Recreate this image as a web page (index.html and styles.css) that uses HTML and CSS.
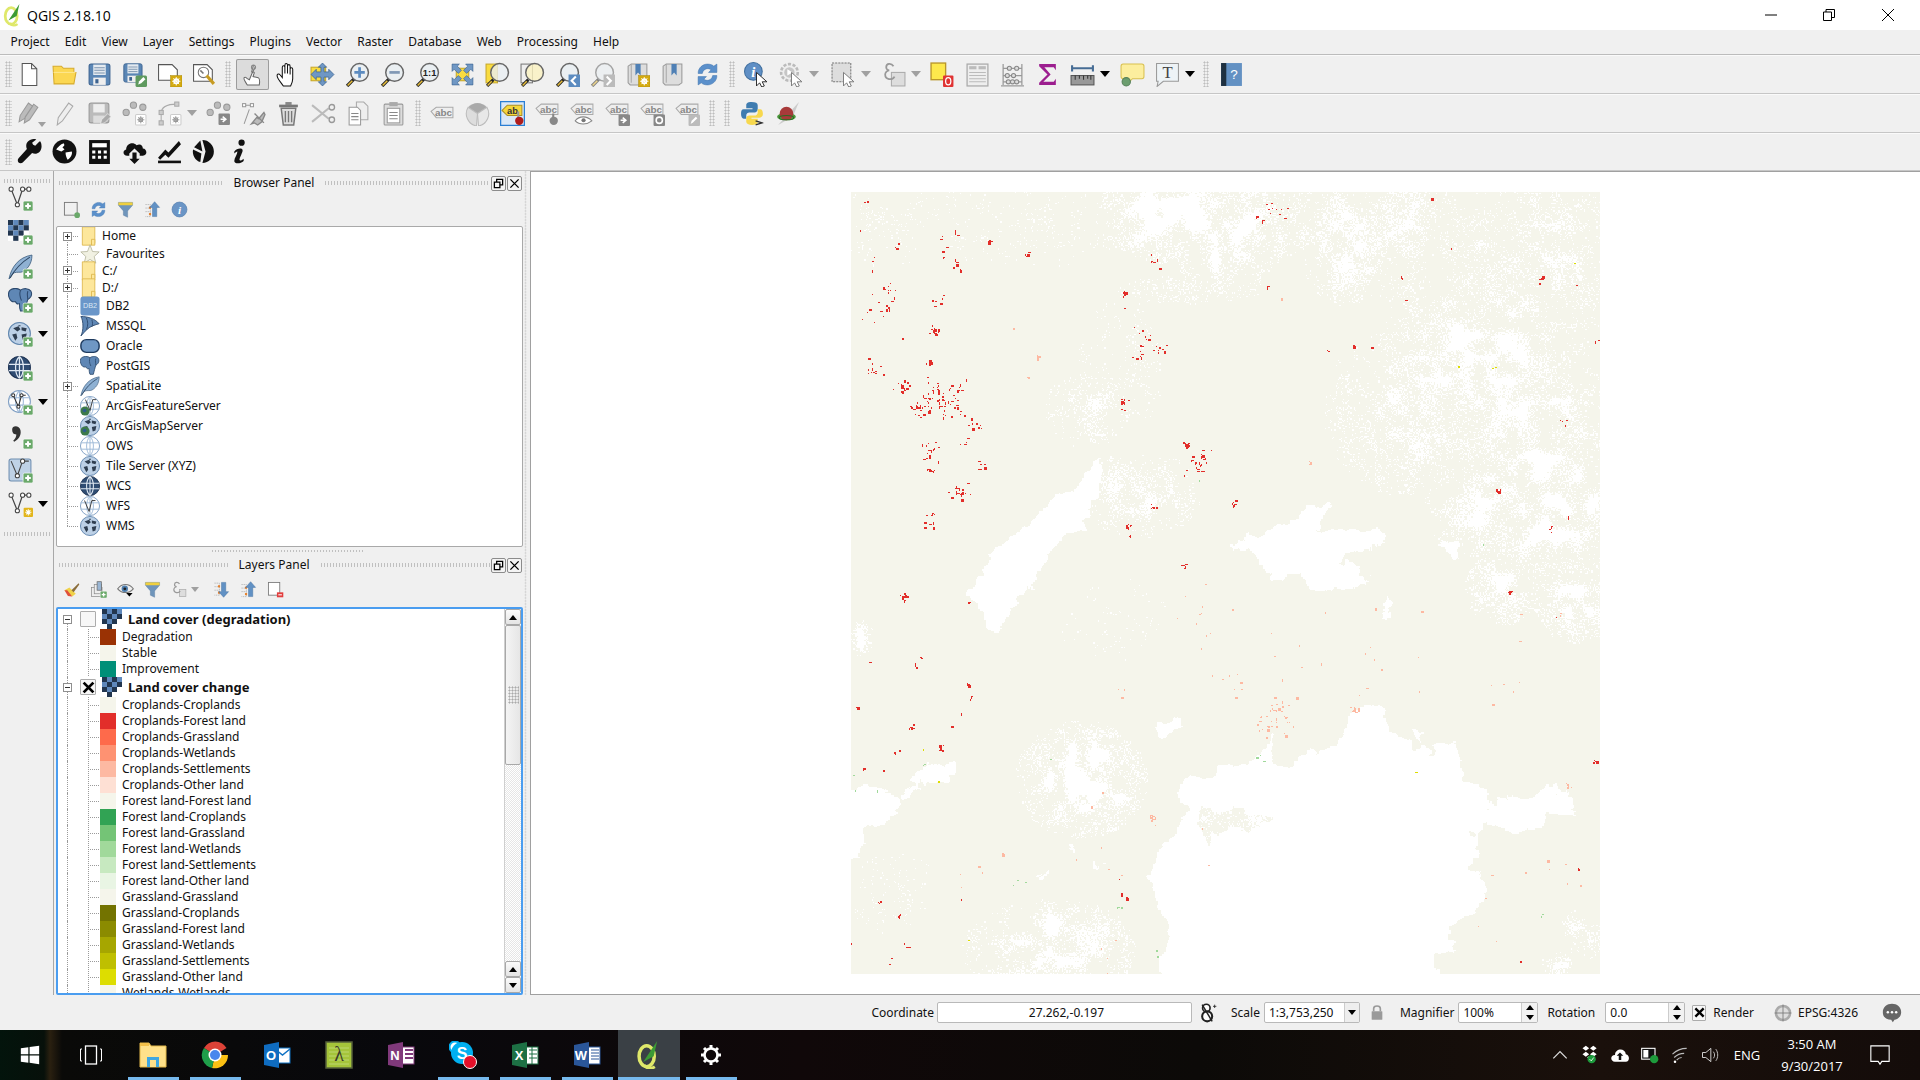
FILE: index.html
```html
<!DOCTYPE html>
<html lang="en">
<head>
<meta charset="utf-8">
<title>QGIS 2.18.10</title>
<link rel="stylesheet" href="styles.css">
</head>
<body>
<svg class="defs" width="0" height="0" aria-hidden="true">
<defs>
<g id="bplus"><rect x="14.5" y="14.5" width="9.5" height="9.5" rx="1.5" fill="#6aa96a" stroke="#fff" stroke-width=".6"/><path d="M19.2 16.5v5.4M16.5 19.2h5.4" stroke="#fff" stroke-width="2"/></g>
<g id="bgear"><rect x="13" y="13" width="11" height="11" fill="#d4aa10" stroke="#a98a10" stroke-width=".5"/><circle cx="18.5" cy="18.5" r="2.2" fill="none" stroke="#fff" stroke-width="1.4"/><path d="M18.5 14.5v8M14.5 18.5h8M15.7 15.7l5.6 5.6M21.3 15.7l-5.6 5.6" stroke="#fff" stroke-width=".9"/></g>
<g id="bgeargrey"><rect x="13" y="13" width="10" height="10" rx="1" fill="#fff" stroke="#ccc"/><circle cx="18" cy="18" r="1.8" fill="none" stroke="#999" stroke-width="1.2"/><path d="M18 14.5v7M14.5 18h7M15.5 15.5l5 5M20.5 15.5l-5 5" stroke="#999" stroke-width=".8"/></g>
<symbol id="new" viewBox="0 0 24 24"><path d="M5 1.500h9l5 5v16H5z" fill="#fff" stroke="#555"/><path d="M14 1.500v5h5" fill="none" stroke="#555"/></symbol>
<symbol id="open" viewBox="0 0 24 24"><path d="M1 4h8l2 2h10v4h2l-2 11H2z" fill="#fbd752" stroke="#d6ab2d"/><path d="M1.500 10h21" stroke="#fde78f"/></symbol>
<symbol id="save" viewBox="0 0 24 24"><rect x="2" y="2" width="20" height="20" rx="2" fill="#5a86b5" stroke="#3d6390"/><rect x="6" y="2.500" width="12" height="10" fill="#e4eaf0"/><path d="M7 5.500h10M7 8h10M7 10.500h10" stroke="#7b94ae"/><rect x="6" y="15" width="12" height="7" fill="#eee"/><rect x="8" y="16.500" width="3" height="4" fill="#3d6390"/></symbol>
<symbol id="saveas" viewBox="0 0 24 24"><use href="#save" width="21" height="21"/><rect x="13" y="13" width="11" height="11" rx="1.500" fill="#5f9a5f"/><path d="M15.500 21.500l1-3 4-4 2 2-4 4z" fill="#fff"/></symbol>
<symbol id="compnew" viewBox="0 0 24 24"><path d="M1.500 2.500h13l5 5v10H1.500z" fill="#fff" stroke="#555"/><use href="#bgear"/></symbol>
<symbol id="compmgr" viewBox="0 0 24 24"><path d="M1.500 2.500h13l5 5v11H1.500z" fill="#fff" stroke="#555"/><circle cx="11" cy="10" r="5" fill="#fff" stroke="#777"/><path d="M14 13l7 8" stroke="#c79b22" stroke-width="3"/><path d="M8 8l3 3" stroke="#777" stroke-width="1.500"/></symbol>
<symbol id="touch" viewBox="0 0 24 24"><path d="M11 10l2-7M15 4l-3 6" stroke="#777" fill="none"/><circle cx="13" cy="5" r="2" fill="none" stroke="#888"/><path d="M7 22c-2-3-4-6-3-7s2 0 3 1l2 1 3-7c1-1 2 0 1.500 1l-1 3 5 1c2 1 1.500 4 1 7z" fill="#fff" stroke="#666"/></symbol>
<symbol id="hand" viewBox="0 0 24 24"><path d="M8 23c-2-3-6-7-6-10 0-2 2-2 3-.5l2 2.500V5c0-2 2.500-2 2.500 0v6V3c0-2 2.500-2 2.500 0v8V4c0-2 2.500-2 2.500 0v8V7c0-2 2.500-2 2.500 0v9c0 3-1 5-2 7z" fill="#fff" stroke="#111"/></symbol>
<symbol id="pan" viewBox="0 0 24 24"><rect x="1" y="5" width="14" height="13" fill="#f9dc40" stroke="#c7a72a"/><path d="M12 1l4 4h-2.500v4.500H18V7l5 5-5 5v-2.500h-4.500V19H16l-4 4-4-4h2.500v-4.500H6V17l-5-5 5-5v2.500h4.500V5H8z" fill="#6f97c4" stroke="#36608f" stroke-width=".7"/></symbol>
<g id="mag"><path d="M2 23l7-7" stroke="#222" stroke-width="3.200"/><path d="M2.500 22.500l4.500-4.500" stroke="#e7bd3b" stroke-width="1.500"/><circle cx="14" cy="10" r="8.500" fill="#eaeff2" stroke="#666" stroke-width="1.400"/></g>
<symbol id="zin" viewBox="0 0 24 24"><use href="#mag"/><path d="M14 5v10M9 10h10" stroke="#5b8bc0" stroke-width="2.600"/></symbol>
<symbol id="zout" viewBox="0 0 24 24"><use href="#mag"/><path d="M9 10h10" stroke="#7f98b5" stroke-width="2.600"/></symbol>
<symbol id="z11" viewBox="0 0 24 24"><use href="#mag"/><text x="14" y="13" font-size="9" font-weight="700" text-anchor="middle" fill="#222" font-family="Liberation Sans">1:1</text></symbol>
<symbol id="zfull" viewBox="0 0 24 24"><rect x="6" y="6" width="12" height="12" fill="#f9dc40" stroke="#c7a72a"/><path d="M2 2h7l-2 2 4 4-3 3-4-4-2 2zM22 2v7l-2-2-4 4-3-3 4-4-2-2zM22 22h-7l2-2-4-4 3-3 4 4 2-2zM2 22v-7l2 2 4-4 3 3-4 4 2 2z" fill="#6f97c4" stroke="#36608f" stroke-width=".6"/></symbol>
<symbol id="zlayer" viewBox="0 0 24 24"><rect x="1" y="2" width="11" height="18" fill="#f9dc40" stroke="#c7a72a"/><path d="M2 23l6-6" stroke="#222" stroke-width="3"/><path d="M2.500 22.500l4-4" stroke="#e7bd3b" stroke-width="1.400"/><circle cx="14" cy="10" r="8.500" fill="#eaeff2" fill-opacity=".8" stroke="#666" stroke-width="1.400"/></symbol>
<symbol id="zsel" viewBox="0 0 24 24"><rect x="1" y="2" width="11" height="18" fill="#eee" stroke="#777"/><path d="M2 23l6-6" stroke="#222" stroke-width="3"/><path d="M2.500 22.500l4-4" stroke="#e7bd3b" stroke-width="1.400"/><circle cx="14" cy="10" r="8.500" fill="#fbf3c0" fill-opacity=".8" stroke="#666" stroke-width="1.400"/></symbol>
<symbol id="zlast" viewBox="0 0 24 24"><use href="#mag"/><rect x="13" y="12" width="11" height="12" fill="#5b8bc0"/><path d="M20 14l-4 4 4 4" fill="none" stroke="#fff" stroke-width="2"/></symbol>
<symbol id="znext" viewBox="0 0 24 24"><g opacity=".55"><use href="#mag"/></g><rect x="13" y="12" width="11" height="12" fill="#bbb"/><path d="M16 14l4 4-4 4" fill="none" stroke="#fff" stroke-width="2"/></symbol>
<symbol id="bookm" viewBox="0 0 24 24"><path d="M3 20V4l3-2h15v18l-3 2H5z" fill="#ddd" stroke="#999"/><path d="M6 2v18" stroke="#aaa"/><path d="M10 2h5v11l-2.500-3L10 13z" fill="#4f80b5"/><use href="#bgear"/></symbol>
<symbol id="bookm2" viewBox="0 0 24 24"><path d="M3 20V4l3-2h15v18l-3 2H5z" fill="#ddd" stroke="#999"/><path d="M6 2v18" stroke="#aaa"/><path d="M11 2h5v11l-2.500-3L11 13z" fill="#4f80b5"/></symbol>
<symbol id="refresh" viewBox="0 0 24 24"><path d="M3 11C3 5 8 2 12 2c3 0 5 1 6 2l3-2v8h-8l2.500-2.500C13 5.500 8 6 7 11zM21 13c0 6-5 9-9 9-3 0-5-1-6-2l-3 2v-8h8l-2.500 2.500C11 18.500 16 18 17 13z" fill="#5b90cb" stroke="#3f73ad" stroke-width=".5"/></symbol>
<g id="cursor"><path d="M12 10l0 13 3-3 2 4 2.500-1-2-4h4.500z" fill="#fff" stroke="#222" stroke-width=".9"/></g>
<symbol id="ident" viewBox="0 0 24 24"><circle cx="9" cy="9" r="8.500" fill="#5f8fc5" stroke="#41709f"/><text x="9" y="14" font-size="14" font-style="italic" font-weight="700" fill="#fff" text-anchor="middle" font-family="Liberation Serif">i</text><use href="#cursor"/></symbol>
<symbol id="action" viewBox="0 0 24 24"><circle cx="10" cy="10" r="8" fill="#eee" stroke="#bbb" stroke-width="2.500" stroke-dasharray="3 1.500"/><circle cx="10" cy="10" r="5" fill="#c6c6c6"/><path d="M8 7l5 3-5 3z" fill="#fff"/><path d="M12 10l0 13 3-3 2 4 2.500-1-2-4h4.500z" fill="#fff" stroke="#777" stroke-width=".9"/></symbol>
<symbol id="select" viewBox="0 0 24 24"><rect x="1" y="1" width="18" height="18" fill="#ddd" stroke="#777" stroke-dasharray="2 1"/><path d="M12 10l0 13 3-3 2 4 2.500-1-2-4h4.500z" fill="#fff" stroke="#777" stroke-width=".9"/></symbol>
<symbol id="expr" viewBox="0 0 24 24"><rect x="10" y="10" width="13" height="13" fill="#ddd" stroke="#aaa"/><path d="M12 4C10 1 5 1 5 5c0 2 2 3 3 3-2 0-4 2-4 4 0 5 7 6 9 2" fill="none" stroke="#999" stroke-width="1.700"/></symbol>
<symbol id="desel" viewBox="0 0 24 24"><rect x="1" y="1" width="14" height="16" fill="#fde84c" stroke="#b9962a" stroke-width="1.300"/><rect x="12.500" y="13" width="10" height="11" rx="1" fill="#e03333"/><ellipse cx="17.500" cy="18.500" rx="2.500" ry="3.500" fill="none" stroke="#fff" stroke-width="1.200"/></symbol>
<symbol id="table" viewBox="0 0 24 24"><rect x="2" y="2" width="20" height="21" fill="#eee" stroke="#aaa" stroke-width="1.200"/><rect x="4" y="4" width="7" height="3" fill="#bbb"/><rect x="13" y="4" width="7" height="3" fill="#bbb"/><path d="M4 10h16M4 13h16M4 16h16M4 19h16" stroke="#bbb"/></symbol>
<symbol id="abacus" viewBox="0 0 24 24"><path d="M3 2v20M21 2v20M1 23h22M3 6h18M3 13h18M3 19h18" stroke="#999" fill="none" stroke-width="1.200"/><circle cx="9" cy="6" r="2" fill="#ddd" stroke="#888"/><circle cx="16" cy="6" r="2" fill="#ddd" stroke="#888"/><circle cx="7" cy="13" r="2" fill="#ddd" stroke="#888"/><circle cx="13" cy="13" r="2" fill="#ddd" stroke="#888"/><circle cx="8" cy="19" r="2" fill="#ddd" stroke="#888"/><circle cx="12" cy="19" r="2" fill="#ddd" stroke="#888"/><circle cx="16" cy="19" r="2" fill="#ddd" stroke="#888"/></symbol>
<symbol id="sigma" viewBox="0 0 24 24"><path d="M4 2h16v6l-2-3H9l6 7-7 7h10l2-3v6H4v-2l8-8-8-8z" fill="#9c1e8f"/></symbol>
<symbol id="measure" viewBox="0 0 24 24"><path d="M2 6h20M2 3v6M22 3v6" stroke="#466c94" stroke-width="2" fill="none"/><rect x="1" y="13" width="22" height="9" fill="#999" stroke="#555"/><path d="M5 13v4M9 13v3M13 13v4M17 13v3M20 13v4" stroke="#333"/></symbol>
<symbol id="tip" viewBox="0 0 24 24"><path d="M3 2h18c1.500 0 2 1 2 2v10c0 1.500-1 2-2 2H12l-4 4-1-4H3c-1.500 0-2-1-2-2V4c0-1 .5-2 2-2z" fill="#fcee9e" stroke="#d8c04f"/><circle cx="6" cy="19" r="4" fill="#6c9e6f" stroke="#56805a"/></symbol>
<symbol id="ttext" viewBox="0 0 24 24"><path d="M1.500 1.500h21v17H8l-6 5 1-5H1.500z" fill="#eef3f6" stroke="#999"/><text x="12" y="15" font-size="16" fill="#444" text-anchor="middle" font-family="Liberation Serif">T</text></symbol>
<symbol id="help" viewBox="0 0 24 24"><rect x="2" y="1" width="20" height="22" fill="#6391c3"/><rect x="2" y="1" width="5" height="22" fill="#1e3040"/><text x="14.500" y="16" font-size="13" fill="#fff" text-anchor="middle" font-family="Liberation Sans">?</text></symbol>
<symbol id="edits" viewBox="0 0 24 24"><path d="M2 20l1-6 8-12 4 3-8 12zM7 21l1-6 8-12 4 3-8 12z" fill="#bbb" stroke="#999"/></symbol>
<symbol id="pencil" viewBox="0 0 24 24"><path d="M5 23l1-7 10-14 4 3-10 14z" fill="#eee" stroke="#aaa"/></symbol>
<symbol id="savelyr" viewBox="0 0 24 24"><rect x="2" y="2" width="19" height="19" rx="2" fill="#bbb" stroke="#999"/><rect x="6" y="3" width="11" height="8" fill="#eee"/><rect x="6" y="14" width="11" height="7" fill="#ddd"/><path d="M13 22l1-4 6-6 3 3-6 6z" fill="#aaa" stroke="#eee" stroke-width=".7"/></symbol>
<symbol id="addfeat" viewBox="0 0 24 24"><circle cx="4" cy="11" r="3" fill="#bbb" stroke="#999"/><circle cx="11" cy="4" r="3" fill="#bbb" stroke="#999"/><circle cx="20" cy="6" r="3" fill="#bbb" stroke="#999"/><use href="#bgeargrey"/></symbol>
<symbol id="addcurve" viewBox="0 0 24 24"><path d="M4 21V12C4 6 10 3 19 3" fill="none" stroke="#aaa"/><rect x="2" y="19" width="4" height="4" fill="#ccc" stroke="#aaa"/><rect x="17" y="1" width="4" height="4" fill="#ccc" stroke="#aaa"/><rect x="2" y="9" width="4" height="4" fill="#ccc" stroke="#aaa"/><use href="#bgeargrey"/></symbol>
<symbol id="movefeat" viewBox="0 0 24 24"><circle cx="4" cy="11" r="3" fill="#bbb" stroke="#999"/><circle cx="11" cy="4" r="3" fill="#bbb" stroke="#999"/><circle cx="20" cy="6" r="3" fill="#bbb" stroke="#999"/><rect x="12" y="12" width="11" height="11" rx="1" fill="#888"/><path d="M14 17.500h4M16 15l3 2.500-3 2.500" stroke="#fff" stroke-width="1.500" fill="none"/></symbol>
<symbol id="nodetool" viewBox="0 0 24 24"><path d="M3 22l5-14M3 4h9M12 4v0" stroke="#999" fill="none"/><rect x="1.500" y="2.500" width="3" height="3" fill="#fff" stroke="#999"/><rect x="9" y="2.500" width="3" height="3" fill="#fff" stroke="#999"/><path d="M10 22l5-6 2 1 5-6 1 2-3 7-4 3-3-2zM13 12l9 9" stroke="#888" stroke-width="1.300" fill="#bbb"/></symbol>
<symbol id="trash" viewBox="0 0 24 24"><path d="M5 7h14l-2 16H7z" fill="#ddd" stroke="#777" stroke-width="1.400"/><path d="M9 9.500v11M12 9.500v11M15 9.500v11" stroke="#777" stroke-width="1.300"/><rect x="3" y="3.500" width="18" height="2.500" fill="#777"/><rect x="9" y="1" width="6" height="3" fill="#888"/></symbol>
<symbol id="cut" viewBox="0 0 24 24"><path d="M1 4l16 13M1 20L17 7" stroke="#bbb" stroke-width="2"/><circle cx="20" cy="6" r="2.600" fill="none" stroke="#999" stroke-width="1.300"/><circle cx="20" cy="18" r="2.600" fill="none" stroke="#999" stroke-width="1.300"/></symbol>
<symbol id="copy" viewBox="0 0 24 24"><path d="M10 1h7l4 4v13H10z" fill="#eee" stroke="#aaa"/><path d="M3 6h8l3 3v14H3z" fill="#fff" stroke="#999"/><path d="M5 12h7M5 15h7M5 18h7" stroke="#888"/></symbol>
<symbol id="paste" viewBox="0 0 24 24"><rect x="3" y="3" width="18" height="20" rx="1" fill="#ddd" stroke="#999"/><rect x="6" y="7" width="12" height="14" fill="#fff" stroke="#999"/><rect x="8" y="1" width="8" height="4" fill="#aaa"/><path d="M8 11h8M8 14h8M8 17h8" stroke="#888"/></symbol>
<g id="abc"><path d="M1 7l5-4h16v10H6z" fill="#eee" stroke="#aaa"/><text x="13" y="11.500" font-size="9.500" font-weight="700" fill="#888" text-anchor="middle" font-family="Liberation Sans">abc</text></g>
<symbol id="labela" viewBox="0 0 24 24"><g transform="translate(0 3)"><use href="#abc"/></g></symbol>
<symbol id="labelp" viewBox="0 0 24 24"><path d="M12 12L3 6a12 12 0 0 1 18 0z" fill="#aaa"/><path d="M12 12l9-6a12 12 0 0 1-8 18z" fill="#e8e8e8" stroke="#bbb"/><path d="M12 12L3 6a12 12 0 0 0 8 18z" fill="#ddd" stroke="#bbb"/></symbol>
<symbol id="labely" viewBox="0 0 24 24"><rect x=".6" y=".6" width="22.800" height="22.800" fill="#dbe8f7" stroke="#2b7fd4" stroke-width="1.200"/><path d="M2 9l5-5h14v10H7z" fill="#f5d73c" stroke="#ac9024"/><text x="12" y="12.500" font-size="9" font-weight="700" fill="#333" text-anchor="middle" font-family="Liberation Sans">ab</text><path d="M17.500 10v7" stroke="#999" stroke-width="2"/><circle cx="18.500" cy="19" r="4" fill="#b01c1c"/></symbol>
<symbol id="labelm" viewBox="0 0 24 24"><use href="#abc"/><path d="M17.500 12v5" stroke="#888" stroke-width="2"/><circle cx="18" cy="19" r="4" fill="#888"/></symbol>
<symbol id="labele" viewBox="0 0 24 24"><use href="#abc"/><path d="M5 19c4-5 11-5 16 0-5 4-12 4-16 0z" fill="#fff" stroke="#888"/><circle cx="13" cy="18.500" r="2" fill="#777"/></symbol>
<symbol id="labelv" viewBox="0 0 24 24"><use href="#abc"/><rect x="13" y="13" width="11" height="11" rx="1" fill="#888"/><path d="M15 18.500h4M17 16l3 2.500-3 2.500" stroke="#fff" stroke-width="1.500" fill="none"/></symbol>
<symbol id="labelr" viewBox="0 0 24 24"><use href="#abc"/><rect x="13" y="13" width="11" height="11" rx="1" fill="#888"/><circle cx="18.500" cy="18.500" r="3" fill="none" stroke="#fff" stroke-width="1.500"/></symbol>
<symbol id="labeled" viewBox="0 0 24 24"><use href="#abc"/><rect x="13" y="13" width="11" height="11" rx="1" fill="#bbb"/><path d="M15 22l1-3 4-4 1.500 1.500-4 4z" fill="#fff"/></symbol>
<symbol id="python" viewBox="0 0 24 24"><path d="M11 1c-4 0-5 1.500-5 3v3h6v1H3.500C1.500 8 1 10 1 12.500S2 17 3.500 17H6v-3c0-2 1.500-3 3-3h5c1.500 0 3-1 3-3V4c0-2-2-3-6-3z" fill="#3f7cb0"/><path d="M12 23c4 0 5-1.500 5-3v-3h-6v-1h7.500c1.500 0 3.500-1 3.500-3.500S21 8 19.500 8H17v3c0 2-1.500 3-3 3H9c-1.500 0-3 1-3 3v3c0 2 2 3 6 3z" fill="#f7d84e"/><path d="M15 19l6 2-6 2" fill="none" stroke="#333" stroke-width="1.300"/></symbol>
<symbol id="plugin" viewBox="0 0 24 24"><path d="M3 23L23 1l-6 14z" fill="#ccc"/><ellipse cx="11" cy="15" rx="9" ry="3.500" fill="#4c9a3d"/><circle cx="11" cy="12" r="6.500" fill="#a83a3a"/><ellipse cx="11" cy="16" rx="7" ry="2" fill="none" stroke="#2c6a20"/></symbol>
<symbol id="wrench" viewBox="0 0 24 24"><path d="M21 2l-4 4-2-1-1-2 4-3c-3-1-6 0-8 2s-2 5-1 7L1 18c-1 1-1 3 0 4s3 1 4 0l9-9c2 1 5 1 7-1s3-6 1-10z" fill="#111" transform="translate(.5 .5)"/></symbol>
<symbol id="bglobe" viewBox="0 0 24 24"><circle cx="12" cy="12" r="11.500" fill="#111"/><path d="M4 10c3-4 5-5 7-6 2 2 0 3-1 4l2 2-3 2c-2-1-3-1-5-2zM13 13l6-1c1 3-2 7-4 8-1-2-2-4-2-7z" fill="#fff"/></symbol>
<symbol id="calc" viewBox="0 0 24 24"><path d="M2 1h20v23H2z" fill="#111"/><path d="M5 4h14v4H5z" fill="#fff"/><path d="M5 11h3v3H5zM10.500 11h3v3h-3zM16 11h3v3h-3zM5 16h3v3H5zM10.500 16h3v3h-3zM16 16h3v3h-3z" fill="#fff"/></symbol>
<symbol id="cloud" viewBox="0 0 24 24"><path d="M5 16C1 16 0 11 4 10c0-5 6-8 10-4 4-2 6 1 6 3 4 0 5 7 0 7h-3v-2l-5-5-5 5v2z" fill="#111"/><path d="M10 13h4v6h3l-5 5-5-5h3z" fill="#111"/></symbol>
<symbol id="chart" viewBox="0 0 24 24"><path d="M1 22h22" stroke="#111" stroke-width="2.500"/><path d="M1 18l7-8 3 3 10-11 2 3-12 13-3-3-5 5z" fill="#111"/></symbol>
<symbol id="pie" viewBox="0 0 24 24"><path d="M10 1v0A11 11 0 1 1 10 23L13 12z" fill="#111"/><path d="M8 1.500L2 8 10 12z" fill="#111"/><path d="M1 10l8 4-1 8C3 21 0 15 1 10z" fill="#111"/></symbol>
<symbol id="info" viewBox="0 0 24 24"><circle cx="14" cy="3.500" r="3" fill="#111"/><path d="M7 12c2-3 8-4 8-1 0 2-3 7-3 9 0 1 2 1 4-1v2c-3 3-9 3-9 0 0-3 3-6 3-9-1 0-2 1-3 2z" fill="#111"/></symbol>
<symbol id="vplus" viewBox="0 0 24 24"><path d="M3 3l6 15 5-15h6" fill="none" stroke="#444" stroke-width="1.200"/><circle cx="3" cy="3" r="2" fill="#fff" stroke="#444"/><circle cx="9" cy="18" r="2" fill="#fff" stroke="#444"/><circle cx="14" cy="3" r="2" fill="#fff" stroke="#444"/><circle cx="20" cy="3" r="2" fill="#fff" stroke="#444"/><use href="#bplus"/></symbol>
<g id="checker"><rect width="20" height="20" fill="#fff"/><rect width="5" height="5" fill="#22364f"/><rect x="5" width="5" height="5" fill="#5f88bb"/><rect x="10" width="5" height="5" fill="#22364f"/><rect x="15" width="5" height="5" fill="#5f88bb"/><rect y="5" width="5" height="5" fill="#5f88bb"/><rect x="5" y="5" width="5" height="5" fill="#22364f"/><rect x="10" y="5" width="5" height="5" fill="#5f88bb"/><rect x="15" y="5" width="5" height="5" fill="#22364f"/><rect y="10" width="5" height="5" fill="#22364f"/><rect x="5" y="10" width="5" height="5" fill="#5f88bb"/><rect x="10" y="10" width="5" height="5" fill="#22364f"/><rect x="5" y="15" width="5" height="5" fill="#22364f"/></g>
<symbol id="rasterp" viewBox="0 0 24 24"><use href="#checker"/><use href="#bplus"/></symbol>
<symbol id="checkers" viewBox="0 0 20 20"><use href="#checker"/></symbol>
<g id="feather"><path d="M1 24C3 13 10 3 23 1c0 9-5 14-9 16-2 1-5 0-8 1-2 1-3 3-5 6z" fill="#8fb1d3" stroke="#3f5f80" stroke-width=".8"/><path d="M2 23C7 14 13 8 21 3" stroke="#2d4663" fill="none"/></g>
<symbol id="featherp" viewBox="0 0 24 24"><use href="#feather"/><use href="#bplus"/></symbol>
<symbol id="featheri" viewBox="0 0 24 24"><use href="#feather"/></symbol>
<g id="eleph"><path d="M2 2c3-2 7-2 10 0 3-2 8-2 10 1 2 4-1 7-3 8-1 3-2 7-3 11h-4c-1-2-1-5-1-7-2 1-3 0-4-2-3 1-5-1-6-4-1-3-1-5 1-7z" fill="#5f87b5" stroke="#2d4a6e"/><path d="M12 2c-1 3-1 6 1 10M19 3c-1 3 0 6 0 8" stroke="#2d4a6e" fill="none"/></g>
<symbol id="elephp" viewBox="0 0 24 24"><use href="#eleph"/><use href="#bplus"/></symbol>
<symbol id="elephi" viewBox="0 0 24 24"><use href="#eleph"/></symbol>
<g id="gdots"><circle cx="11" cy="11" r="10.500" fill="#bcd0e6" stroke="#5f85ad"/><path d="M5 6l5-2 2 3-3 2zM13 5l5 1-1 3-4-1zM4 12l4-1 1 4-2 3zM13 12l5-1-1 5-3 1zM10 3l2 0v1h-2z" fill="#2f3e50"/></g>
<symbol id="gdotsp" viewBox="0 0 24 24"><use href="#gdots"/><use href="#bplus"/></symbol>
<symbol id="gdotsi" viewBox="0 0 22 22"><use href="#gdots"/></symbol>
<g id="gdark"><circle cx="11" cy="11" r="10.500" fill="#2f4c72" stroke="#1b3050"/><path d="M1 8h20M1 14h20M11 .5v21M11 .5C6 5 6 17 11 21.500M11 .5c5 4.500 5 16.500 0 21" stroke="#dfe8f2" stroke-width="1.200" fill="none"/></g>
<symbol id="gdarkp" viewBox="0 0 24 24"><use href="#gdark"/><use href="#bplus"/></symbol>
<symbol id="gdarki" viewBox="0 0 22 22"><use href="#gdark"/></symbol>
<g id="ggrid"><circle cx="11" cy="11" r="10.500" fill="#fff" stroke="#7d9dc2"/><path d="M1 7.500h20M1 14.500h20M11 .5v21M11 .5C6 5 6 17 11 21.500M11 .5c5 4.500 5 16.500 0 21" stroke="#9bb7d6" fill="none"/></g>
<symbol id="ggridi" viewBox="0 0 22 22"><use href="#ggrid"/></symbol>
<symbol id="gvp" viewBox="0 0 24 24"><use href="#ggrid"/><path d="M5 5l5 11 3-11h4" fill="none" stroke="#333" stroke-width="1"/><circle cx="5" cy="5" r="1.500" fill="#fff" stroke="#333"/><circle cx="10" cy="16" r="1.500" fill="#fff" stroke="#333"/><circle cx="13" cy="5" r="1.500" fill="#fff" stroke="#333"/><use href="#bplus"/></symbol>
<symbol id="gvi" viewBox="0 0 22 22"><use href="#ggrid"/><path d="M5 5l5 12 3-12h4" fill="none" stroke="#333"/></symbol>
<symbol id="agsf" viewBox="0 0 22 22"><use href="#ggrid"/><path d="M6 4l5 12 3-12h4" fill="none" stroke="#333"/><circle cx="5.500" cy="16.500" r="5" fill="#3d7a4a"/><circle cx="5" cy="16" r="2" fill="#2d5b8c"/></symbol>
<symbol id="agsm" viewBox="0 0 22 22"><use href="#gdots"/><circle cx="5.500" cy="16.500" r="5" fill="#3d7a4a"/><circle cx="5" cy="16" r="2" fill="#2d5b8c"/></symbol>
<symbol id="comma" viewBox="0 0 24 24"><path d="M4 5c0-4 7-4 8 1 1 5-2 9-6 11l-1-1c2-2 3-4 3-6-3 0-4-2-4-5z" fill="#333"/><use href="#bplus"/></symbol>
<symbol id="vbox" viewBox="0 0 24 24"><rect x="1" y="1" width="21" height="21" rx="2" fill="#bfd2e6" stroke="#6f8eb0"/><path d="M3 3l6 14 5-14h6" fill="none" stroke="#444"/><circle cx="9" cy="17" r="2" fill="#fff" stroke="#444"/><circle cx="14" cy="3" r="2" fill="#fff" stroke="#444"/><use href="#bplus"/></symbol>
<symbol id="vgear" viewBox="0 0 24 24"><path d="M3 3l6 15 5-15h6" fill="none" stroke="#444" stroke-width="1.200"/><circle cx="3" cy="3" r="2" fill="#fff" stroke="#444"/><circle cx="9" cy="18" r="2" fill="#fff" stroke="#444"/><circle cx="14" cy="3" r="2" fill="#fff" stroke="#444"/><circle cx="20" cy="3" r="2" fill="#fff" stroke="#444"/><rect x="15" y="15" width="9" height="9" rx="1" fill="#e2b51b"/><path d="M19.500 16.500v6M16.500 19.500h6M17.500 17.500l4 4M21.500 17.500l-4 4" stroke="#fff"/></symbol>
<symbol id="newgpkg" viewBox="0 0 24 24"><rect x="2" y="2" width="18" height="18" fill="none" stroke="#777" stroke-width="1.300"/><circle cx="20" cy="20" r="4" fill="#6aa96a"/></symbol>
<symbol id="filter" viewBox="0 0 24 24"><path d="M2 2h20v4l-7 8v9l-6-3v-6L2 6z" fill="#6f95bb" stroke="#557aa0" stroke-width=".6"/><rect x="2" y="2" width="20" height="4" fill="#f0d03e"/></symbol>
<symbol id="collapse" viewBox="0 0 24 24"><path d="M2 5h7v17H2M2 10h7M2 15h7" fill="none" stroke="#aaa" stroke-dasharray="2 1"/><rect x="7" y="8" width="3" height="3" fill="#e6822e"/><rect x="7" y="17" width="3" height="3" fill="#e6822e"/><path d="M15 1l7 8h-4v13h-6V9H8z" fill="#6191c4" stroke="#3b6a9c" stroke-width=".6"/></symbol>
<symbol id="expand" viewBox="0 0 24 24"><path d="M2 3h7v17H2M2 8h7M2 13h7" fill="none" stroke="#aaa" stroke-dasharray="2 1"/><rect x="7" y="6" width="3" height="3" fill="#e6822e"/><rect x="7" y="15" width="3" height="3" fill="#e6822e"/><path d="M15 23l7-8h-4V2h-6v13H8z" fill="#6191c4" stroke="#3b6a9c" stroke-width=".6"/></symbol>
<symbol id="infob" viewBox="0 0 24 24"><circle cx="12" cy="12" r="10.500" fill="#6a95c6" stroke="#5680ae"/><text x="12" y="18" font-size="16" font-weight="700" font-style="italic" fill="#fff" text-anchor="middle" font-family="Liberation Serif">i</text></symbol>
<symbol id="style" viewBox="0 0 24 24"><path d="M2 13l7-4 9 9-5 4z" fill="#f0d24a"/><path d="M2 13l5 8 6 1-7-9z" fill="#e0503a"/><path d="M12 13L22 3l1 2-8 11z" fill="#8a6d3b"/></symbol>
<symbol id="addgroup" viewBox="0 0 24 24"><rect x="2" y="9" width="15" height="13" fill="#eee" stroke="#888"/><rect x="6" y="5" width="10" height="13" fill="#eee" stroke="#888"/><rect x="10" y="1" width="6" height="12" fill="#9ab6d4" stroke="#666"/><use href="#bplus"/></symbol>
<symbol id="eye" viewBox="0 0 24 24"><path d="M1 11c6-8 16-8 22 0-6 7-16 7-22 0z" fill="#eee" stroke="#777" stroke-width="1.500"/><circle cx="11" cy="11" r="4.500" fill="#4d7eaf"/><circle cx="11" cy="11" r="2" fill="#222"/><path d="M13 17h9l-4.500 5z" fill="#000"/></symbol>
<symbol id="exprs" viewBox="0 0 24 24"><rect x="12" y="12" width="9" height="10" fill="#ddd" stroke="#aaa"/><path d="M12 4C10 1 5 1 5 5c0 2 2 3 3 3-2 0-4 2-4 4 0 5 7 6 9 2" fill="none" stroke="#999" stroke-width="1.700"/></symbol>
<symbol id="rmlayer" viewBox="0 0 24 24"><rect x="2" y="2" width="16" height="18" fill="#fff" stroke="#777" stroke-width="1.200"/><rect x="14" y="16" width="9" height="7" fill="#e23e3e"/><path d="M16 19.500h5" stroke="#fff" stroke-width="1.500"/></symbol>
<symbol id="folder" viewBox="0 0 24 24"><path d="M4 1h15v20h-4v2H4z" fill="#fde79c" stroke="#dcb64a"/><path d="M19 16h-4v7h4z" fill="#fde79c" stroke="#dcb64a"/></symbol>
<symbol id="star" viewBox="0 0 24 24"><path d="M12 1l3 8 8 .5-6 5.500 2 8-7-4.500L5 23l2-8-6-5.500L9 9z" fill="#f1f1e2" stroke="#b6b69c"/></symbol>
<symbol id="db2" viewBox="0 0 22 22"><rect x=".5" y=".5" width="21" height="21" rx="3" fill="#6a96c9"/><text x="11" y="13.500" font-size="8" fill="#dbe7f3" text-anchor="middle" font-family="Liberation Sans">DB2</text></symbol>
<symbol id="mssql" viewBox="0 0 22 22"><path d="M1 22C4 16 4 6 1 .5c8 0 16 3 20 8-4 1-10 3-13 6-2 2-5 5-7 7.500z" fill="#5f87b5" stroke="#2d4a6e"/><path d="M7 2c2 4 2 9 0 13M13 4c1 3 1 6 0 8" stroke="#2d4a6e" fill="none"/></symbol>
<symbol id="oracle" viewBox="0 0 22 16"><rect x="1" y="1" width="20" height="14" rx="6" fill="#6f97c4" stroke="#1f3b5f" stroke-width="1.600"/></symbol>
<symbol id="crs" viewBox="0 0 24 24"><circle cx="12" cy="12" r="10" fill="#aaa"/><circle cx="12" cy="12" r="7" fill="#ddd"/><path d="M2 12h20M12 2v20" stroke="#777"/></symbol>
<symbol id="lock" viewBox="0 0 24 24"><rect x="4" y="10" width="16" height="13" rx="1" fill="#9a9a9a"/><path d="M7 10V6c0-5 10-5 10 0v4" fill="none" stroke="#9a9a9a" stroke-width="2.500"/></symbol>
<symbol id="mapt" viewBox="0 0 24 24"><circle cx="10" cy="6" r="4.500" fill="#fff" stroke="#222" stroke-width="2"/><circle cx="11" cy="16" r="6" fill="#fff" stroke="#222" stroke-width="2.500"/><path d="M5 2l12 20" stroke="#222" stroke-width="1.800"/><path d="M20 2v4M18 4h4" stroke="#222"/></symbol>
<symbol id="bubble" viewBox="0 0 24 24"><path d="M12 1c6 0 11 4 11 10s-5 9-8 9l-2 3-2-3C5 20 1 17 1 11S6 1 12 1z" fill="#666"/><circle cx="7" cy="11" r="1.500" fill="#fff"/><circle cx="12" cy="11" r="1.500" fill="#fff"/><circle cx="17" cy="11" r="1.500" fill="#fff"/></symbol>
<symbol id="qgis" viewBox="0 0 24 24"><ellipse cx="10" cy="13" rx="6.500" ry="9" fill="none" stroke="#dfe86a" stroke-width="3"/><path d="M8 21c3 3 6 3 9 1" stroke="#dfe86a" stroke-width="2.500" fill="none"/><path d="M7 18L19 0l-3 13z" fill="#3c9a35"/></symbol>
<symbol id="tv" viewBox="0 0 24 24"><rect x="6.500" y="3" width="11" height="18" fill="none" stroke="#fff" stroke-width="1.300"/><path d="M3 6H1.500v12H3M21 6h1.500v12H21" fill="none" stroke="#fff"/></symbol>
<symbol id="win" viewBox="0 0 24 24"><path d="M1 4l9-1.300V11H1zM11.500 2.500L23 1v10H11.500zM1 12.500h9v8.800L1 20zM11.500 12.500H23V23l-11.500-1.600z" fill="#fff"/></symbol>
<symbol id="explorer" viewBox="0 0 28 28"><path d="M1 2h9l2 3h15v21H1z" fill="#ffe18a" stroke="#e2b84a"/><rect x="1" y="2" width="9" height="3" fill="#f3c04a"/><path d="M8 16h12v10H8z" fill="#3fa7e0"/><path d="M11 19h6v7h-6z" fill="#ffe18a"/></symbol>
<symbol id="chrome" viewBox="0 0 28 28"><path d="M14 14L3 7a13 13 0 0 1 22.500 0z" fill="#dc4237"/><path d="M14 14H27A13 13 0 0 1 11 27z" fill="#fbc013"/><path d="M14 14l-3 13A13 13 0 0 1 3 7z" fill="#1f9e4a"/><circle cx="14" cy="14" r="6.500" fill="#fff"/><circle cx="14" cy="14" r="5" fill="#4a87ed"/></symbol>
<symbol id="outlook" viewBox="0 0 28 28"><rect x="12" y="7" width="15" height="15" fill="#fff" stroke="#0f72c4"/><path d="M12 8l7.500 6L27 8" fill="none" stroke="#0f72c4" stroke-width="1.500"/><path d="M1 4l15-3v26L1 24z" fill="#0f6cc0"/><text x="8" y="19" font-size="13" font-weight="700" fill="#fff" text-anchor="middle" font-family="Liberation Sans">O</text></symbol>
<symbol id="lambda" viewBox="0 0 28 28"><rect x="1" y="1" width="26" height="26" fill="#a5c43a" stroke="#55603a" stroke-width="1.500"/><path d="M4 7h20M4 11h20M4 15h20M4 19h20M4 23h20" stroke="#bcd770" stroke-width="1"/><text x="14" y="20" font-size="20" fill="#3a3a2a" text-anchor="middle" font-family="Liberation Serif">&#955;</text></symbol>
<symbol id="onenote" viewBox="0 0 28 28"><rect x="14" y="6" width="13" height="17" fill="#fff" stroke="#80397b"/><path d="M18 9h8M18 13h8M18 17h8" stroke="#80397b" stroke-width="2"/><path d="M1 4l15-3v26L1 24z" fill="#80397b"/><text x="8" y="19" font-size="13" font-weight="700" fill="#fff" text-anchor="middle" font-family="Liberation Sans">N</text></symbol>
<symbol id="skype" viewBox="0 0 28 28"><circle cx="6" cy="6" r="5.500" fill="#fff" stroke="#00aff0" stroke-width="2"/><circle cx="13" cy="12" r="11" fill="#00aff0"/><circle cx="20" cy="20" r="6" fill="#00aff0"/><text x="13" y="18" font-size="16" font-weight="700" fill="#fff" text-anchor="middle" font-family="Liberation Sans">S</text><circle cx="21" cy="21" r="6.500" fill="#e3102a" stroke="#fff"/></symbol>
<symbol id="excel" viewBox="0 0 28 28"><rect x="14" y="6" width="13" height="17" fill="#fff" stroke="#1d7044"/><path d="M18 9h8M18 13h8M18 17h8M21 6v17" stroke="#1d7044"/><path d="M1 4l15-3v26L1 24z" fill="#1d7044"/><text x="8" y="19" font-size="13" font-weight="700" fill="#fff" text-anchor="middle" font-family="Liberation Sans">X</text></symbol>
<symbol id="word" viewBox="0 0 28 28"><rect x="14" y="6" width="13" height="17" fill="#fff" stroke="#2a5699"/><path d="M18 9h8M18 12h8M18 15h8M18 18h8" stroke="#2a5699"/><path d="M1 4l15-3v26L1 24z" fill="#2a5699"/><text x="8" y="19" font-size="13" font-weight="700" fill="#fff" text-anchor="middle" font-family="Liberation Sans">W</text></symbol>
<symbol id="gear" viewBox="0 0 24 24"><circle cx="12" cy="12" r="6.500" fill="none" stroke="#fff" stroke-width="2.600"/><path d="M12 2v4M12 18v4M2 12h4M18 12h4M5 5l2.800 2.800M16.200 16.200L19 19M19 5l-2.800 2.800M7.800 16.200L5 19" stroke="#fff" stroke-width="3"/></symbol>
<symbol id="dropbox" viewBox="0 0 18 24"><path d="M4 1l4 3-4 3-4-3zM13 1l4 3-4 3-4-3zM4 8l4 3-4 3-4-3zM13 8l4 3-4 3-4-3zM8.500 13l3 2-3 2-3-2z" fill="#fff"/><circle cx="11" cy="17" r="5" fill="#1d9b3c"/><path d="M8.500 17l2 2 3-4" stroke="#fff" fill="none"/></symbol>
<symbol id="tcloud" viewBox="0 0 24 24"><path d="M6 20c-6 0-6-8 0-8 0-8 12-9 13-1 5 1 5 9 0 9z" fill="#fff"/><path d="M12 9l4 4h-2.500v5h-3v-5H8z" fill="#111"/></symbol>
<symbol id="batt" viewBox="0 0 24 24"><rect x="2" y="4" width="16" height="13" fill="#111" stroke="#fff" stroke-width="1.300"/><rect x="4" y="6" width="6" height="9" fill="#fff"/><circle cx="17" cy="17" r="5" fill="#1d9b3c"/></symbol>
<symbol id="wifi" viewBox="0 0 24 24"><path d="M3 11c5-5 12-7 17-7M5 15c3-3 8-5 12-5M8 18c2-2 4-3 6-3" fill="none" stroke="#bbb" stroke-width="1.300"/><circle cx="6" cy="20" r="1.500" fill="#fff"/></symbol>
<symbol id="speaker" viewBox="0 0 24 24"><path d="M3 9h4l6-5v16l-6-5H3z" fill="none" stroke="#ddd" stroke-width="1.100"/><path d="M16 8c2 2 2 6 0 8M19 5c3 4 3 10 0 14" fill="none" stroke="#ddd"/></symbol>
<symbol id="notif" viewBox="0 0 24 24"><path d="M2 2h20v17H14l-2 3-2-3H2z" fill="none" stroke="#fff" stroke-width="1.200"/></symbol>
</defs>
</svg>

<div class="window">
  <header class="titlebar">
    <svg class="title-ico"><use href="#qgis"/></svg>
    <span class="title-text">QGIS 2.18.10</span>
    <div class="winctl">
      <span class="wc"><svg class="wc-i" viewBox="0 0 12 12"><path d="M0 6h12" stroke="#000"/></svg></span>
      <span class="wc"><svg class="wc-i" viewBox="0 0 12 12"><path d="M.5 3h8v8.500H.5zM3 3V.5h8.500v8H9" fill="none" stroke="#000"/></svg></span>
      <span class="wc"><svg class="wc-i" viewBox="0 0 12 12"><path d="M0 0l12 12M12 0L0 12" stroke="#000"/></svg></span>
    </div>
  </header>

  <nav class="menubar"><span>Project</span><span>Edit</span><span>View</span><span>Layer</span><span>Settings</span><span>Plugins</span><span>Vector</span><span>Raster</span><span>Database</span><span>Web</span><span>Processing</span><span>Help</span></nav>

  <div class="toolbar">
    <i class="grip"></i>
    <b class="t"><svg class="ico"><use href="#new"/></svg></b>
    <b class="t"><svg class="ico"><use href="#open"/></svg></b>
    <b class="t"><svg class="ico"><use href="#save"/></svg></b>
    <b class="t"><svg class="ico"><use href="#saveas"/></svg></b>
    <b class="t"><svg class="ico"><use href="#compnew"/></svg></b>
    <b class="t"><svg class="ico"><use href="#compmgr"/></svg></b>
    <i class="grip g13"></i>
    <b class="t on"><svg class="ico"><use href="#touch"/></svg></b>
    <b class="t"><svg class="ico"><use href="#hand"/></svg></b>
    <b class="t"><svg class="ico"><use href="#pan"/></svg></b>
    <b class="t"><svg class="ico"><use href="#zin"/></svg></b>
    <b class="t"><svg class="ico"><use href="#zout"/></svg></b>
    <b class="t"><svg class="ico"><use href="#z11"/></svg></b>
    <b class="t"><svg class="ico"><use href="#zfull"/></svg></b>
    <b class="t"><svg class="ico"><use href="#zlayer"/></svg></b>
    <b class="t"><svg class="ico"><use href="#zsel"/></svg></b>
    <b class="t"><svg class="ico"><use href="#zlast"/></svg></b>
    <b class="t"><svg class="ico"><use href="#znext"/></svg></b>
    <b class="t"><svg class="ico"><use href="#bookm"/></svg></b>
    <b class="t"><svg class="ico"><use href="#bookm2"/></svg></b>
    <b class="t"><svg class="ico"><use href="#refresh"/></svg></b>
    <i class="grip g14"></i>
    <b class="t"><svg class="ico"><use href="#ident"/></svg></b>
    <b class="t"><svg class="ico"><use href="#action"/></svg></b><u class="arr grey w17"></u>
    <b class="t"><svg class="ico"><use href="#select"/></svg></b><u class="arr grey w15"></u>
    <b class="t"><svg class="ico"><use href="#expr"/></svg></b><u class="arr grey w14"></u>
    <b class="t"><svg class="ico"><use href="#desel"/></svg></b>
    <b class="t"><svg class="ico"><use href="#table"/></svg></b>
    <b class="t"><svg class="ico"><use href="#abacus"/></svg></b>
    <b class="t"><svg class="ico"><use href="#sigma"/></svg></b>
    <b class="t"><svg class="ico"><use href="#measure"/></svg></b><u class="arr w15"></u>
    <b class="t"><svg class="ico"><use href="#tip"/></svg></b>
    <b class="t"><svg class="ico"><use href="#ttext"/></svg></b><u class="arr w13"></u>
    <i class="grip g16"></i>
    <b class="t"><svg class="ico"><use href="#help"/></svg></b>
  </div>

  <div class="toolbar">
    <i class="grip"></i>
    <b class="t"><svg class="ico"><use href="#edits"/></svg><u class="arr grey mini"></u></b>
    <b class="t"><svg class="ico"><use href="#pencil"/></svg></b>
    <b class="t"><svg class="ico"><use href="#savelyr"/></svg></b>
    <b class="t"><svg class="ico"><use href="#addfeat"/></svg></b>
    <b class="t"><svg class="ico"><use href="#addcurve"/></svg></b><u class="arr grey w14"></u>
    <b class="t"><svg class="ico"><use href="#movefeat"/></svg></b>
    <b class="t"><svg class="ico"><use href="#nodetool"/></svg></b>
    <b class="t"><svg class="ico"><use href="#trash"/></svg></b>
    <b class="t"><svg class="ico"><use href="#cut"/></svg></b>
    <b class="t"><svg class="ico"><use href="#copy"/></svg></b>
    <b class="t"><svg class="ico"><use href="#paste"/></svg></b>
    <i class="grip g14"></i>
    <b class="t"><svg class="ico"><use href="#labela"/></svg></b>
    <b class="t"><svg class="ico"><use href="#labelp"/></svg></b>
    <b class="t"><svg class="ico"><use href="#labely"/></svg></b>
    <b class="t"><svg class="ico"><use href="#labelm"/></svg></b>
    <b class="t"><svg class="ico"><use href="#labele"/></svg></b>
    <b class="t"><svg class="ico"><use href="#labelv"/></svg></b>
    <b class="t"><svg class="ico"><use href="#labelr"/></svg></b>
    <b class="t"><svg class="ico"><use href="#labeled"/></svg></b>
    <i class="grip g14"></i>
    <i class="grip g16"></i>
    <b class="t"><svg class="ico"><use href="#python"/></svg></b>
    <b class="t"><svg class="ico"><use href="#plugin"/></svg></b>
  </div>

  <div class="toolbar tb3">
    <i class="grip"></i>
    <b class="t"><svg class="ico"><use href="#wrench"/></svg></b>
    <b class="t"><svg class="ico"><use href="#bglobe"/></svg></b>
    <b class="t"><svg class="ico"><use href="#calc"/></svg></b>
    <b class="t"><svg class="ico"><use href="#cloud"/></svg></b>
    <b class="t"><svg class="ico"><use href="#chart"/></svg></b>
    <b class="t"><svg class="ico"><use href="#pie"/></svg></b>
    <b class="t"><svg class="ico"><use href="#info"/></svg></b>
  </div>

  <div class="main">
    <aside class="lefttb">
      <i class="hgrip top"></i>
      <b class="lt"><svg class="ico"><use href="#vplus"/></svg></b>
      <b class="lt"><svg class="ico"><use href="#rasterp"/></svg></b>
      <b class="lt"><svg class="ico"><use href="#featherp"/></svg></b>
      <b class="lt"><svg class="ico"><use href="#elephp"/></svg><u class="arr"></u></b>
      <b class="lt"><svg class="ico"><use href="#gdotsp"/></svg><u class="arr"></u></b>
      <b class="lt"><svg class="ico"><use href="#gdarkp"/></svg></b>
      <b class="lt"><svg class="ico"><use href="#gvp"/></svg><u class="arr"></u></b>
      <b class="lt"><svg class="ico"><use href="#comma"/></svg></b>
      <b class="lt"><svg class="ico"><use href="#vbox"/></svg></b>
      <b class="lt"><svg class="ico"><use href="#vgear"/></svg><u class="arr"></u></b>
      <i class="hgrip bottom"></i>
    </aside>

    <section class="docks">
      <div class="dockhead">
        <i class="hgrip"></i><span class="docktitle">Browser Panel</span><i class="hgrip"></i>
        <span class="dbtn"><svg viewBox="0 0 12 12"><path d="M1.500 4.500h6v6h-6zM4 4.500v-3h6.500v6h-3" fill="none" stroke="#000" stroke-width="1.400"/></svg></span>
        <span class="dbtn"><svg viewBox="0 0 12 12"><path d="M1.500 1.500l9 9M10.500 1.500l-9 9" stroke="#000" stroke-width="1.500"/></svg></span>
      </div>
      <div class="docktools dt-browser">
        <b class="d"><svg class="ics"><use href="#newgpkg"/></svg></b>
        <b class="d"><svg class="ics"><use href="#refresh"/></svg></b>
        <b class="d"><svg class="ics"><use href="#filter"/></svg></b>
        <b class="d"><svg class="ics"><use href="#collapse"/></svg></b>
        <b class="d"><svg class="ics"><use href="#infob"/></svg></b>
      </div>
      <div class="tree browser">
        <div class="row h18 first"><s class="exp plus"></s><svg class="fi"><use href="#folder"/></svg><span class="lab tight">Home</span></div>
        <div class="row h17"><svg class="ri"><use href="#star"/></svg><span class="lab">Favourites</span></div>
        <div class="row h17"><s class="exp plus"></s><svg class="fi"><use href="#folder"/></svg><span class="lab tight">C:/</span></div>
        <div class="row h17"><s class="exp plus"></s><svg class="fi"><use href="#folder"/></svg><span class="lab tight">D:/</span></div>
        <div class="row h20"><svg class="ri"><use href="#db2"/></svg><span class="lab">DB2</span></div>
        <div class="row h20"><svg class="ri"><use href="#mssql"/></svg><span class="lab">MSSQL</span></div>
        <div class="row h20"><svg class="ri"><use href="#oracle"/></svg><span class="lab">Oracle</span></div>
        <div class="row h20"><svg class="ri"><use href="#elephi"/></svg><span class="lab">PostGIS</span></div>
        <div class="row h20"><s class="exp plus"></s><svg class="ri"><use href="#featheri"/></svg><span class="lab">SpatiaLite</span></div>
        <div class="row h20"><svg class="ri"><use href="#agsf"/></svg><span class="lab">ArcGisFeatureServer</span></div>
        <div class="row h20"><svg class="ri"><use href="#agsm"/></svg><span class="lab">ArcGisMapServer</span></div>
        <div class="row h20"><svg class="ri"><use href="#ggridi"/></svg><span class="lab">OWS</span></div>
        <div class="row h20"><svg class="ri"><use href="#gdotsi"/></svg><span class="lab">Tile Server (XYZ)</span></div>
        <div class="row h20"><svg class="ri"><use href="#gdarki"/></svg><span class="lab">WCS</span></div>
        <div class="row h20"><svg class="ri"><use href="#gvi"/></svg><span class="lab">WFS</span></div>
        <div class="row h20 last"><svg class="ri"><use href="#gdotsi"/></svg><span class="lab">WMS</span></div>
      </div>
      <div class="splitter"><i class="hgrip"></i></div>
      <div class="dockhead">
        <i class="hgrip"></i><span class="docktitle">Layers Panel</span><i class="hgrip"></i>
        <span class="dbtn"><svg viewBox="0 0 12 12"><path d="M1.500 4.500h6v6h-6zM4 4.500v-3h6.500v6h-3" fill="none" stroke="#000" stroke-width="1.400"/></svg></span>
        <span class="dbtn"><svg viewBox="0 0 12 12"><path d="M1.500 1.500l9 9M10.500 1.500l-9 9" stroke="#000" stroke-width="1.500"/></svg></span>
      </div>
      <div class="docktools dt-layers">
        <b class="d"><svg class="ics"><use href="#style"/></svg></b>
        <b class="d"><svg class="ics"><use href="#addgroup"/></svg></b>
        <b class="d"><svg class="ics"><use href="#eye"/></svg></b>
        <b class="d"><svg class="ics"><use href="#filter"/></svg></b>
        <b class="d"><svg class="ics"><use href="#exprs"/></svg></b><u class="arr grey d-arr"></u>
        <b class="d"><svg class="ics"><use href="#expand"/></svg></b>
        <b class="d"><svg class="ics"><use href="#collapse"/></svg></b>
        <b class="d"><svg class="ics"><use href="#rmlayer"/></svg></b>
      </div>
      <div class="tree layers">
        <div class="layer-rows">
          <div class="lrow head first"><s class="exp minus"></s><span class="chk"></span><svg class="lico"><use href="#checkers"/></svg><strong>Land cover (degradation)</strong></div>
          <div class="lrow sub"><em class="sw c-deg"></em>Degradation</div>
          <div class="lrow sub"><em class="sw c-nil"></em>Stable</div>
          <div class="lrow sub lastsub"><em class="sw c-imp"></em>Improvement</div>
          <div class="lrow head"><s class="exp minus"></s><span class="chk"><svg viewBox="0 0 12 12"><path d="M1.500 1.500l9 9M10.500 1.500l-9 9" stroke="#000" stroke-width="2.600"/></svg></span><svg class="lico"><use href="#checkers"/></svg><strong>Land cover change</strong></div>
          <div class="lrow sub"><em class="sw c-nil"></em>Croplands-Croplands</div>
          <div class="lrow sub"><em class="sw c-r1"></em>Croplands-Forest land</div>
          <div class="lrow sub"><em class="sw c-r2"></em>Croplands-Grassland</div>
          <div class="lrow sub"><em class="sw c-r3"></em>Croplands-Wetlands</div>
          <div class="lrow sub"><em class="sw c-r4"></em>Croplands-Settlements</div>
          <div class="lrow sub"><em class="sw c-r5"></em>Croplands-Other land</div>
          <div class="lrow sub"><em class="sw c-nil"></em>Forest land-Forest land</div>
          <div class="lrow sub"><em class="sw c-g1"></em>Forest land-Croplands</div>
          <div class="lrow sub"><em class="sw c-g2"></em>Forest land-Grassland</div>
          <div class="lrow sub"><em class="sw c-g3"></em>Forest land-Wetlands</div>
          <div class="lrow sub"><em class="sw c-g4"></em>Forest land-Settlements</div>
          <div class="lrow sub"><em class="sw c-g5"></em>Forest land-Other land</div>
          <div class="lrow sub"><em class="sw c-nil"></em>Grassland-Grassland</div>
          <div class="lrow sub"><em class="sw c-o1"></em>Grassland-Croplands</div>
          <div class="lrow sub"><em class="sw c-o2"></em>Grassland-Forest land</div>
          <div class="lrow sub"><em class="sw c-o3"></em>Grassland-Wetlands</div>
          <div class="lrow sub"><em class="sw c-o4"></em>Grassland-Settlements</div>
          <div class="lrow sub"><em class="sw c-o5"></em>Grassland-Other land</div>
          <div class="lrow sub"><em class="sw c-nil"></em>Wetlands-Wetlands</div>
        </div>
        <div class="sbar">
          <span class="sb-btn"><u class="up"></u></span>
          <span class="sb-thumb"><i class="sb-grip"></i></span>
          <span class="sb-track"></span>
          <span class="sb-btn"><u class="up"></u></span>
          <span class="sb-btn"><u class="down"></u></span>
        </div>
      </div>
    </section>

    <div class="gutter"></div>
    <section class="canvas-wrap"><canvas id="map" class="map" width="612" height="639"></canvas></section>
  </div>

  <footer class="status">
    <span class="stl first">Coordinate</span>
    <span class="inp coord">27.262,-0.197</span>
    <svg class="sic m6"><use href="#mapt"/></svg>
    <span class="stl m13">Scale</span>
    <span class="inp combo">1:3,753,250<u class="cmb"><u class="down"></u></u></span>
    <svg class="sic lock"><use href="#lock"/></svg>
    <span class="stl m15">Magnifier</span>
    <span class="inp spin">100%<u class="spn"><u class="up"></u><u class="down"></u></u></span>
    <span class="stl m9">Rotation</span>
    <span class="inp spin m10">0.0<u class="spn"><u class="up"></u><u class="down"></u></u></span>
    <span class="chk small"><svg viewBox="0 0 12 12"><path d="M1.500 1.500l9 9M10.500 1.500l-9 9" stroke="#000" stroke-width="2.600"/></svg></span>
    <span class="stl m7">Render</span>
    <svg class="sic m21"><use href="#crs"/></svg>
    <span class="stl m5">EPSG:4326</span>
    <svg class="sic m23"><use href="#bubble"/></svg>
  </footer>

  <footer class="taskbar">
    <span class="tk first"><svg class="tki sm"><use href="#win"/></svg></span>
    <span class="tk tview"><svg class="tki mid"><use href="#tv"/></svg></span>
    <span class="tk run"><svg class="tki"><use href="#explorer"/></svg></span>
    <span class="tk run"><svg class="tki"><use href="#chrome"/></svg></span>
    <span class="tk"><svg class="tki"><use href="#outlook"/></svg></span>
    <span class="tk"><svg class="tki"><use href="#lambda"/></svg></span>
    <span class="tk"><svg class="tki"><use href="#onenote"/></svg></span>
    <span class="tk run"><svg class="tki"><use href="#skype"/></svg></span>
    <span class="tk run"><svg class="tki"><use href="#excel"/></svg></span>
    <span class="tk run"><svg class="tki"><use href="#word"/></svg></span>
    <span class="tk run active"><svg class="tki"><use href="#qgis"/></svg></span>
    <span class="tk run"><svg class="tki mid"><use href="#gear"/></svg></span>
    <div class="tray">
      <span class="tr"><svg class="tri" viewBox="0 0 24 24"><path d="M4 16l8-8 8 8" fill="none" stroke="#ddd" stroke-width="1.500"/></svg></span>
      <span class="tr"><svg class="tri"><use href="#dropbox"/></svg></span>
      <span class="tr"><svg class="tri"><use href="#tcloud"/></svg></span>
      <span class="tr"><svg class="tri"><use href="#batt"/></svg></span>
      <span class="tr"><svg class="tri"><use href="#wifi"/></svg></span>
      <span class="tr"><svg class="tri"><use href="#speaker"/></svg></span>
      <span class="lang">ENG</span>
      <span class="clock"><span>3:50 AM</span><span>9/30/2017</span></span>
      <span class="tr notif"><svg class="tri"><use href="#notif"/></svg></span>
    </div>
  </footer>
</div>
<script src="map.js"></script>
</body>
</html>
```
FILE: styles.css
```css
* { box-sizing: border-box; }
html, body { margin: 0; height: 100%; overflow: hidden; }
body { font: 12px/1 "Noto Sans", "Liberation Sans", sans-serif; color: #111; background: #f0f0f0; }
.defs { position: absolute; }
b, strong, u, s, em, i { font-style: normal; text-decoration: none; }
b { font-weight: 400; }
.window { width: 1920px; height: 1080px; display: flex; flex-direction: column; overflow: hidden; }

.titlebar { height: 30px; background: #fff; display: flex; align-items: center; padding-left: 2px; flex: none; }
.title-ico { width: 22px; height: 24px; flex: none; }
.title-text { font: 14px "Open Sans", sans-serif; margin-left: 3px; color: #000; }
.winctl { margin-left: auto; display: flex; padding-right: 3px; }
.wc { width: 58.500px; height: 30px; display: flex; align-items: center; justify-content: center; }
.wc-i { width: 12px; height: 12px; }

.menubar { height: 25px; flex: none; display: flex; align-items: center; padding-left: 2.500px; border-bottom: 1px solid #bcbcbc; background: #f0f0f0; }
.menubar span { padding: 0 8px; margin-right: -.900px; }

.toolbar { height: 39px; flex: none; display: flex; align-items: center; padding-left: 5px; border-bottom: 1px solid #c6c6c6; box-shadow: inset 0 1px 0 #fafafa; }
.tb3 { height: 38px; }
.grip { width: 6.500px; height: 26px; flex: none; background-image: radial-gradient(circle, #bdbdbd 45%, transparent 50%); background-size: 3px 3px; background-position: 0 0; }
.g13 { width: 6px; margin: 0 3.500px; }
.g14 { width: 6px; margin: 0 4px; }
.g16 { width: 6px; margin: 0 5px; }
.t { width: 35px; height: 35px; flex: none; display: flex; align-items: center; justify-content: center; position: relative; }
.t.on { background: #dcdcdc; box-shadow: inset 0 0 0 1px #9c9c9c; width: 33px; margin: 0 1px; border-radius: 2px; height: 31px; }
.ico { width: 25px; height: 25px; display: block; overflow: visible; }
.arr { display: block; width: 13px; height: 0; flex: none; position: relative; }
.arr::before { content: ""; position: absolute; left: 0; top: -3px; border: 5px solid transparent; border-top: 6px solid #000; border-bottom: 0; }
.arr.grey::before { border-top-color: #a0a0a0; }
.w13 { width: 13px; } .w14 { width: 14px; } .w15 { width: 15px; } .w17 { width: 17px; }
.mini { position: absolute; right: 1px; bottom: 6px; width: 8px; }
.mini::before { border-width: 4px; border-top-width: 5px; }

.main { flex: 1; min-height: 0; display: flex; }
.lefttb { width: 54px; flex: none; border-right: 1px solid #a8a8a8; display: flex; flex-direction: column; padding-top: 8px; align-items: stretch; }
.hgrip { display: block; height: 4px; flex: 1; background-image: radial-gradient(circle, #c0c0c0 45%, transparent 50%); background-size: 3px 2px; }
.lefttb .hgrip { flex: none; margin: 0 3px 0 3px; }
.lefttb .hgrip.top { margin-bottom: -2px; }
.lefttb .hgrip.bottom { margin-top: 11px; }
.lt { height: 34px; flex: none; display: flex; align-items: center; padding-left: 8px; position: relative; }
.lt .arr { margin-left: 5px; }

.docks { width: 469px; flex: none; display: flex; flex-direction: column; padding-left: 2px; }
.dockhead { height: 24px; flex: none; display: flex; align-items: center; padding: 0 1px 0 2px; }
.docktitle { padding: 0 10px; font-size: 12px; white-space: nowrap; }
.dbtn { width: 15px; height: 15px; margin-left: 1px; border: 1px solid #8c8c8c; border-radius: 2px; background: #f4f4f4; display: flex; align-items: center; justify-content: center; flex: none; }
.dbtn:first-of-type { margin-left: 3px; }
.dbtn svg { width: 11px; height: 11px; }
.docktools { height: 31px; flex: none; display: flex; align-items: center; padding: 0 0 2px 1.500px; }
.docktools.dt-layers { height: 30px; padding-bottom: 5px; }
.d { width: 27px; height: 24px; flex: none; display: flex; align-items: center; justify-content: center; }
.ics { width: 17px; height: 17px; display: block; }
.d-arr { width: 17px; margin-left: -2px; }
.d-arr::before { border-width: 4px; border-top-width: 5px; }

.tree { background: #fff; border: 1px solid #a9a9a9; border-radius: 2px; flex: none; overflow: hidden; }
.tree.browser { height: 321px; }
.tree.layers { height: 388px; border: 2px solid #4a9df0; display: flex; }
.row { display: flex; align-items: center; padding-left: 23px; position: relative; white-space: nowrap; }
.row::before { content: ""; position: absolute; left: 10px; top: 0; bottom: 0; border-left: 1px dotted #9a9a9a; }
.row::after { content: ""; position: absolute; left: 10px; width: 11px; top: 50%; border-top: 1px dotted #9a9a9a; }
.row.first::before { top: 50%; }
.row.last::before { bottom: 50%; }
.h17 { height: 17px; } .h18 { height: 18px; } .h20 { height: 20px; }
.exp { position: absolute; left: 6px; top: 50%; margin-top: -4.500px; width: 9px; height: 9px; background: #fff; border: 1px solid #8f8f8f; z-index: 1; }
.exp::before { content: ""; position: absolute; left: 1px; right: 1px; top: 3px; height: 1px; background: #333; }
.exp.plus::after { content: ""; position: absolute; top: 1px; bottom: 1px; left: 3px; width: 1px; background: #333; }
.ri { width: 20px; height: 20px; flex: none; }
.fi { width: 20px; height: 20px; flex: none; margin-left: -1px; }
.lab { margin-left: 6px; font-size: 12px; }
.lab.tight { margin-left: 3px; }

.layer-rows { flex: 1; min-width: 0; overflow: hidden; }
.lrow { height: 16px; display: flex; align-items: center; position: relative; white-space: nowrap; padding-left: 42px; }
.lrow::before { content: ""; position: absolute; left: 9px; top: 0; bottom: 0; border-left: 1px dotted #9a9a9a; }
.lrow.sub::after { content: ""; position: absolute; left: 30px; width: 11px; top: 50%; border-top: 1px dotted #9a9a9a; }
.lrow.head { height: 20px; padding-left: 22px; font-size: 13px; }
.lrow.head.first::before { top: 50%; }
.lrow.sub { background-image: linear-gradient(#9a9a9a 50%, transparent 50%); background-size: 1px 2px; background-repeat: repeat-y; background-position: 30px 0; }
.head .exp { left: 5px; }
.chk { width: 16px; height: 16px; flex: none; border: 1px solid #acacac; background: #f7f7f7; border-radius: 1px; display: flex; align-items: center; justify-content: center; }
.chk svg { width: 13px; height: 13px; }
.lico { width: 20px; height: 20px; margin-left: 6px; flex: none; }
.lrow strong { margin-left: 6px; font-weight: 700; }
.sw { display: block; width: 16px; height: 16px; margin-right: 6px; flex: none; }
.c-deg { background: #9a3204; } .c-nil { background: #f5f5eb; } .c-imp { background: #008f78; }
.c-r1 { background: #e22e2a; } .c-r2 { background: #fe6a4b; } .c-r3 { background: #fe9272; } .c-r4 { background: #fdb9a2; } .c-r5 { background: #fee0d4; }
.c-g1 { background: #31a354; } .c-g2 { background: #74c476; } .c-g3 { background: #a1d99b; } .c-g4 { background: #c7e9c0; } .c-g5 { background: #e9f5e4; }
.c-o1 { background: #737300; } .c-o2 { background: #8b8b00; } .c-o3 { background: #a6a600; } .c-o4 { background: #bfbf00; } .c-o5 { background: #dddd00; }

.sbar { width: 17px; flex: none; display: flex; flex-direction: column; background: repeating-conic-gradient(#e6e6e6 0 25%, #fff 0 50%) 0 0 / 2px 2px; border-left: 1px solid #cfcfcf; }
.sb-btn { height: 16px; flex: none; background: linear-gradient(#fbfbfb, #e4e4e4); border: 1px solid #a8a8a8; border-radius: 2px; display: flex; align-items: center; justify-content: center; }
.sb-thumb { height: 140px; flex: none; background: linear-gradient(90deg, #f4f4f4, #e6e6e6); border: 1px solid #a8a8a8; border-radius: 2px; display: flex; align-items: center; justify-content: center; }
.sb-grip { width: 11px; height: 18px; background-image: radial-gradient(circle, #aaa 45%, transparent 50%); background-size: 3px 3px; }
.sb-track { flex: 1; }
.up, .down { display: block; width: 0; height: 0; border: 4px solid transparent; }
.up { border-bottom: 5px solid #000; border-top: 0; }
.down { border-top: 5px solid #000; border-bottom: 0; }

.splitter { height: 6px; flex: none; padding: 1px 160px 0 155px; display: flex; align-items: center; }
.splitter .hgrip { height: 2px; }
.gutter { width: 7px; flex: none; background-image: radial-gradient(circle, #c8c8c8 40%, transparent 50%); background-size: 3px 3px; background-repeat: repeat-y; background-position: 1px 50%; }
.canvas-wrap { flex: 1; min-width: 0; background: #fff; border: 1px solid #a0a0a0; border-right: 0; display: flex; align-items: center; justify-content: center; }
.map { width: 749px; height: 782px; display: block; image-rendering: pixelated; }

.status { height: 35px; flex: none; display: flex; align-items: center; padding-right: 18px; white-space: nowrap; background: #f0f0f0; }
.stl.first { margin-left: auto; }
.inp { height: 21px; background: #fff; border: 1px solid #b9b9b9; border-radius: 2px; display: flex; align-items: center; flex: none; padding-left: 4px; position: relative; overflow: hidden; }
.coord { width: 255px; margin-left: 3px; justify-content: center; }
.combo { width: 96px; margin-left: 4px; }
.spin { width: 80px; margin-left: 4px; }
.cmb { position: absolute; right: 0; top: 0; bottom: 0; width: 15px; background: #eee; border-left: 1px solid #ccc; display: flex; align-items: center; justify-content: center; }
.spn { position: absolute; right: 0; top: 0; bottom: 0; width: 16px; background: #f2f2f2; border-left: 1px solid #ccc; display: flex; flex-direction: column; align-items: center; justify-content: space-around; }
.sic { width: 20px; height: 20px; flex: none; }
.sic.lock { width: 16px; height: 19px; margin-left: 9px; }
.m5 { margin-left: 5px; } .m6 { margin-left: 6px; } .m7 { margin-left: 7px; } .m9 { margin-left: 9px; } .m10 { margin-left: 10px; } .m13 { margin-left: 13px; } .m15 { margin-left: 15px; } .m21 { margin-left: 19px; } .m23 { margin-left: 24px; }
.chk.small { width: 14px; height: 16px; margin-left: 7px; }
.chk.small svg { width: 11px; height: 11px; }

.taskbar { height: 50px; flex: none; display: flex; background: linear-gradient(90deg, #03140c 0, #07100a 44px, #2a2010 50px, #0a0a08 62px, #08080c 400px, #100809 800px, #0c0a08 1200px, #1a100b 1600px, #140c0a 1920px); color: #fff; }
.tk { width: 62px; flex: none; display: flex; align-items: center; justify-content: center; position: relative; }
.tk.first { width: 60px; }
.tk.run::after { content: ""; position: absolute; left: 5.500px; right: 5.500px; bottom: 0; height: 3px; background: #76b9ed; }
.tk.active { background: #3a4045; }
.tk.active::after { left: 0; right: 0; }
.tki { width: 28px; height: 28px; }
.tki.sm { width: 20px; height: 20px; }
.tki.mid { width: 24px; height: 24px; }
.tray { margin-left: auto; display: flex; align-items: center; padding-right: 15px; }
.tr { width: 30px; display: flex; justify-content: center; }
.tri { width: 20px; height: 20px; }
.lang { width: 44px; text-align: center; font: 13px "Open Sans", sans-serif; }
.clock { width: 86px; display: flex; flex-direction: column; align-items: center; gap: 7px; font: 13px/1.1 "Open Sans", sans-serif; }
.tr.notif { width: 50px; }
.notif .tri { width: 22px; height: 22px; }
```
FILE: map.js
```js
(function () {
  var cv = document.getElementById('map');
  var ctx = cv.getContext('2d');
  var W = cv.width, H = cv.height;
  var X0 = 850, Y0 = 193, SX = W / 749, SY = H / 782;
  var seed = 20170930;
  function rnd() {
    seed |= 0; seed = seed + 0x6D2B79F5 | 0;
    var t = Math.imul(seed ^ seed >>> 15, 1 | seed);
    t = t + Math.imul(t ^ t >>> 7, 61 | t) ^ t;
    return ((t ^ t >>> 14) >>> 0) / 4294967296;
  }
  function px(x) { return (x - X0) * SX; }
  function py(y) { return (y - Y0) * SY; }
  function poly(pts, col) {
    ctx.fillStyle = col;
    ctx.beginPath();
    for (var i = 0; i < pts.length; i += 2) {
      if (i) ctx.lineTo(px(pts[i]), py(pts[i + 1])); else ctx.moveTo(px(pts[i]), py(pts[i + 1]));
    }
    ctx.closePath();
    ctx.fill();
  }
  var BEIGE = '#f5f5eb', WHITE = '#ffffff';
  ctx.fillStyle = BEIGE;
  ctx.fillRect(0, 0, W, H);

  // Solid water bodies, in screen coordinates
  var water = [
    [1100,453,1087,477,1073,485,1053,498,1033,513,1017,530,997,547,980,567,979,570,973,587,962,598,978,607,982,628,992,632,1013,607,1039,570,1053,547,1073,530,1103,503,1105,490],
    [1442,985,1433,957,1457,957,1445,938,1467,917,1487,892,1470,870,1470,853,1490,827,1500,833,1530,830,1545,815,1575,815,1573,803,1557,787,1533,797,1500,803,1493,813,1487,797,1463,777,1457,740,1433,747,1430,755,1407,730,1425,730,1413,750,1390,733,1377,707,1357,713,1343,733,1317,760,1307,750,1293,770,1270,763,1277,733,1260,760,1240,767,1220,770,1213,780,1190,777,1173,797,1183,810,1160,847,1157,863,1145,880,1153,890,1157,913,1168,923,1168,943,1162,957,1160,985],
    [840,793,873,783,897,797,893,817,863,833,857,857,840,858],
    [917,775,925,762,950,768,953,775,945,783,930,778,912,790,900,797,898,793,915,783],
    [1157,727,1183,718,1185,727,1163,737],
    [1233,543,1300,517,1327,503,1317,530,1377,530,1383,543,1333,563,1360,570,1357,572,1370,580,1340,593,1310,587,1303,575,1270,582,1260,570,1243,550],
    [1382,597,1392,603,1387,623,1383,610],
    [1440,540,1457,548,1463,543,1453,555,1445,552],
    [1037,882,1045,872,1048,875,1042,885],
    [1030,880,1040,873,1035,882],
    [1065,860,1070,845,1072,846,1068,862],
    [1092,860,1100,868,1105,860,1100,872,1092,868]
  ];
  water.forEach(function (p) { poly(p, WHITE); });
  poly([1198,803,1222,812,1240,810,1270,817,1255,832,1232,835,1215,826,1207,845,1200,820], BEIGE);
  poly([1465,832,1475,832,1478,838,1468,840], BEIGE);

  // Sparse-cover blotches: centre x, centre y, radius x, radius y, density
  var blobs = [
    [1190,215,65,35,1.5],[1150,195,30,18,.8],[1225,240,40,35,1.3],[1345,235,35,48,1],[1400,230,40,50,.45],[1300,215,40,30,.25],
    [1480,250,45,50,.35],[1560,250,50,60,.45],[1480,370,70,85,.8],[1410,410,60,60,.6],[1530,410,60,60,.55],[1550,500,55,50,1.6],
    [1490,500,50,40,.85],[1575,600,30,30,1],[1500,590,25,25,.8],[1080,780,45,40,1.5],[1060,950,50,35,1.2],[1020,950,40,30,.6],
    [1085,410,28,26,.55],[1140,495,40,30,.6],[1190,290,50,10,.7],[1120,370,30,50,.2],[1000,225,120,30,.1],[880,225,30,30,.15],
    [858,638,10,12,1.3],[890,890,30,30,.12],[1110,620,40,30,.06],[1585,940,16,14,.6],[1555,965,12,9,1.3],[1575,925,10,10,.9],
    [1235,820,35,18,.9]
  ];
  var grids = {};
  function gv(n, i, j) { var k = n + ':' + i + ',' + j; if (!(k in grids)) grids[k] = rnd(); return grids[k]; }
  function lowf(n, size, x, y) {
    var a = x / size, b = y / size, i = Math.floor(a), j = Math.floor(b), u = a - i, v = b - j;
    return (gv(n, i, j) * (1 - u) + gv(n, i + 1, j) * u) * (1 - v) + (gv(n, i, j + 1) * (1 - u) + gv(n, i + 1, j + 1) * u) * v;
  }
  var img = ctx.getImageData(0, 0, W, H), d = img.data;
  var mask = new Uint8Array(W * H), i0;
  for (i0 = 0; i0 < W * H; i0++) mask[i0] = d[i0 * 4 + 2] > 245 ? 1 : 0;
  for (var y = 0; y < H; y++) {
    for (var x = 0; x < W; x++) {
      var o = (y * W + x) * 4;
      // jagged coastlines: sample the water mask through a small warp
      var wx = x + (lowf(1, 12, x, y) - .5) * 11 + (lowf(2, 4, x, y) - .5) * 5;
      var wy = y + (lowf(3, 12, x, y) - .5) * 11 + (lowf(4, 4, x, y) - .5) * 5;
      wx = Math.max(0, Math.min(W - 1, Math.round(wx)));
      wy = Math.max(0, Math.min(H - 1, Math.round(wy)));
      var isWhite = mask[wy * W + wx] === 1;
      if (!isWhite) {
        var sx = X0 + x / SX, sy = Y0 + y / SY, p = 0;
        for (var b = 0; b < blobs.length; b++) {
          var B = blobs[b], dx = (sx - B[0]) / B[2], dy = (sy - B[1]) / B[3], r = dx * dx + dy * dy;
          if (r < 2.2) p = Math.max(p, B[4] * Math.exp(-r));
        }
        if (p > 0) {
          var f = lowf(5, 9, x, y), g = f * f * 2.6 * (lowf(6, 30, x, y) + .35);
          if (rnd() < p * g) isWhite = true;
        }
      }
      d[o] = isWhite ? 255 : 245; d[o + 1] = isWhite ? 255 : 245; d[o + 2] = isWhite ? 255 : 235; d[o + 3] = 255;
    }
  }
  ctx.putImageData(img, 0, 0);

  // Change pixels: colour, then clusters [x, y, spread, count]
  function specks(col, list) {
    ctx.fillStyle = col;
    list.forEach(function (c) {
      var n = c[3] === undefined ? 1 : c[3], s = c[2] || 0;
      for (var i = 0; i < n; i++) {
        var gx = c[0] + (rnd() + rnd() - 1) * s, gy = c[1] + (rnd() + rnd() - 1) * s;
        var w = rnd() < .35 ? 2 : 1, h = rnd() < .3 ? 2 : 1;
        ctx.fillRect(Math.round(px(gx)), Math.round(py(gy)), w, h);
      }
    });
  }
  specks('#e22e2a', [
    [940,400,26,70],[900,387,9,16],[915,408,7,10],[972,427,9,9],[930,450,13,16],[963,443,5,5],[930,470,8,7],
    [957,493,12,20],[980,467,7,7],[928,515,6,6],[927,527,7,7],[933,330,6,10],[933,331,2,8],[928,362,5,6],[873,373,16,11],
    [957,233,4,4],[940,238,4,3],[988,243,3,7],[1026,256,3,5],[942,253,7,5],[955,265,8,6],[1123,294,3,9],[1123,294,1,6],[1123,309,2,2],
    [1153,260,6,5],[1160,270,3,2],[1123,402,4,9],[1121,410,2,3],[1140,335,10,7],[1135,352,10,8],[1157,350,10,8],
    [1185,445,4,12],[1197,463,17,26],[1152,507,5,6],[1127,527,5,6],[1127,538,4,3],[1232,503,3,5],[1183,566,4,6],
    [880,300,26,22],[873,263,12,3],[865,202,4,2],[858,231,1,1],[895,245,8,3],[935,300,10,5],[902,340,3,2],[942,296,1,1],
    [1255,217,1,3],[1261,222,1,3],[1275,210,14,10],[1266,288,1,2],[1400,278,2,2],[1404,301],[1450,249],[1430,200,1,2],
    [1352,347,1,5],[1326,351,1,2],[1370,349],[1540,280,5,7],[1574,286],[1595,342,2,2],[1563,422,4,4],[1497,492,3,10],
    [1550,528,7,6],[1567,518,1,2],[1232,505,3,4],[903,598,5,12],[968,604,1,2],[915,667,3,4],[920,657,4,2],[967,685,1,5],
    [970,698,2,3],[910,727,4,8],[960,715,1,2],[951,727,1,2],[940,750,5,6],[895,752,3,4],[882,770,1,2],[862,770,1,2],[868,663,1,2],
    [855,708,2,2],[898,917,2,8],[878,903,2,3],[850,944,0,1],[960,900,0,1],[905,950,8,3],[887,962,4,2],[1509,592,2,9],[1593,761,3,5],
    [1577,870,2,3],[1519,961,0,1],[1555,618,0,1],[1118,880,0,1],[1125,900,4,3],[1119,895,2,2]
  ]);
  specks('#fdb9a2', [
    [1273,718,24,42],[1353,710,5,12],[1565,785,5,6],[1420,612,1,2],[1150,818,4,8],[1001,856,2,3],[1037,357,3,6],[1308,464,2,5],
    [1012,330,2,2],[1027,378,1,2],[1235,675,0,1],[1240,690,0,1],[1200,640,20,4],[1250,660,60,8],[1120,700,30,3],[1100,850,60,6],
    [1400,660,70,9],[1500,690,40,5],[1530,620,50,4],[1300,640,50,6],[1560,870,30,5],[1180,850,50,3],[960,880,30,4],[1110,950,30,4],[1500,900,50,5],[1200,600,30,6],[1280,300,0,1]
  ]);
  specks('#a1d99b', [[1118,905,6,4],[1016,885,10,3],[1155,955,6,2],[1260,760,8,3],[874,788,30,3],[1540,920,6,2],[1050,760,0,1],[922,762,6,2],[1198,480,0,1],[1481,545,0,1]]);
  specks('#dddd00', [[1457,367,1,4],[1493,369,2,2],[1573,264,0,1],[922,750,0,1],[937,782,0,1],[1414,773,0,1],[968,941,0,1]]);
})();
```
